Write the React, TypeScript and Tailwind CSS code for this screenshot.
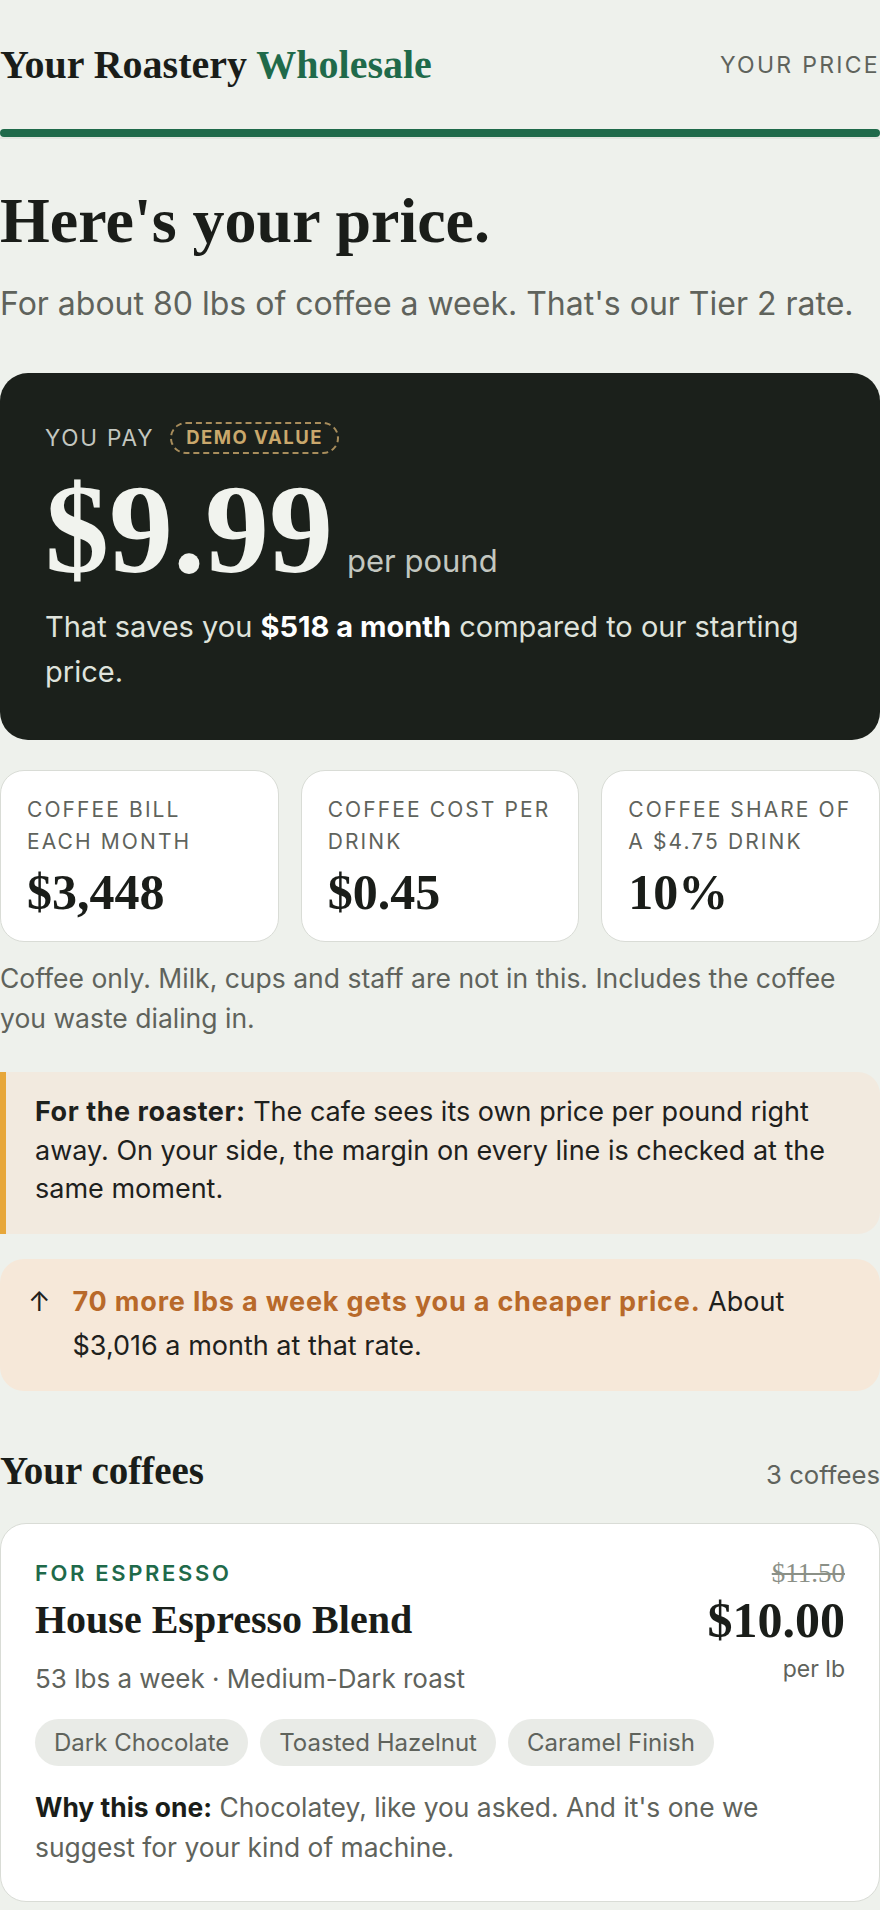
import React from 'react';

const serif = "font-['Liberation_Serif','Times_New_Roman',serif] font-bold";

const stats = [
  { label: ['Coffee bill', 'each month'], value: '$3,448' },
  { label: ['Coffee cost per', 'drink'], value: '$0.45' },
  { label: ['Coffee share of', 'a $4.75 drink'], value: '10%' },
];

const notes = ['Dark Chocolate', 'Toasted Hazelnut', 'Caramel Finish'];

const StatCard: React.FC<{ label: string[]; value: string }> = ({ label, value }) => (
  <div className="rounded-[24px] border border-[#d9dcd6] bg-white px-[26px] pt-[23px] pb-[24px]">
    <div className="text-[21px] leading-[32.7px] uppercase tracking-[0.1em] text-[#5f635c]">
      {label.map((line) => (
        <div key={line} className="whitespace-nowrap">{line}</div>
      ))}
    </div>
    <div className={`${serif} mt-[7.6px] text-[50px] leading-[50px] text-[#1a1d19]`}>{value}</div>
  </div>
);

export default function App() {
  return (
    <div className="min-h-screen bg-[#eef1ec] font-['Inter','Liberation_Sans',sans-serif] text-[#1a1d19]">
      <header className="flex items-center justify-between pt-[42px]">
        <div className={`${serif} text-[40px] leading-[46px]`}>
          Your Roastery <span className="text-[#1f6a4a]">Wholesale</span>
        </div>
        <div className="text-[23px] leading-[46px] tracking-[0.1em] text-[#5f635c]">YOUR PRICE</div>
      </header>
      <div className="mt-[41px] h-[8px] rounded-full bg-[#1f6a4a]" />
      <div className="h-[2px] bg-[#e2e6df]" />

      <h1 className={`${serif} mt-[47px] text-[64px] leading-[70px]`}>Here's your price.</h1>
      <p className="mt-[25px] text-[32px] leading-[45px] text-[#5f635c]">
        For about 80 lbs of coffee a week. That's our Tier 2 rate.
      </p>

      <section className="mt-[47px] rounded-[28px] bg-[#1b201b] px-[45px] pt-[49px] pb-[46px]">
        <div className="flex items-center gap-[16px]">
          <span className="text-[22.5px] leading-[32px] tracking-[0.08em] text-[#c3c7c0]">YOU PAY</span>
          <span className="inline-flex h-[32px] items-center rounded-full border-2 border-dashed border-[#a88d5c] px-[14px] text-[18.5px] font-bold tracking-[0.08em] text-[#caa86c]">
            DEMO VALUE
          </span>
        </div>
        <div className="mt-[11px] flex items-baseline gap-[14px]">
          <span className={`${serif} text-[128px] leading-[128px] text-[#f1f3ee]`}>$9.99</span>
          <span className="text-[31px] text-[#c3c7c0]">per pound</span>
        </div>
        <p className="mt-[10.5px] text-[29px] leading-[45px] text-[#dfe3dc]">
          That saves you <strong className="font-bold text-white">$518 a month</strong> compared to our starting price.
        </p>
      </section>

      <div className="mt-[30px] grid grid-cols-3 gap-[22px]">
        {stats.map((s) => (
          <StatCard key={s.value} label={s.label} value={s.value} />
        ))}
      </div>
      <p className="mt-[16.7px] text-[26.5px] leading-[40px] text-[#5f635c]">
        Coffee only. Milk, cups and staff are not in this. Includes the coffee you waste dialing in.
      </p>

      <div className="mt-[34.3px] rounded-r-[22px] border-l-[6px] border-[#e7a73a] bg-[#f2eadf] pt-[21px] pb-[25.3px] pl-[29px] pr-[35px] text-[27px] leading-[38.5px] text-[#1e211d]">
        <strong className="font-bold tracking-[0.02em]">For the roaster:</strong> The cafe sees its own price per pound
        right away. On your side, the margin on every line is checked at the same moment.
      </div>

      <div className="mt-[25px] flex gap-[22px] rounded-[24px] bg-[#f6e8d9] pt-[21px] pb-[22.5px] pl-[28px] pr-[28px] text-[27px] leading-[44px] text-[#1e211d]">
        <span>↑</span>
        <p>
          <strong className="font-bold tracking-[0.03em] text-[#b8692a]">70 more lbs a week gets you a cheaper price.</strong>{' '}
          About $3,016 a month at that rate.
        </p>
      </div>

      <div className="mt-[58px] flex items-baseline justify-between">
        <h2 className={`${serif} text-[39px] leading-[44px]`}>Your coffees</h2>
        <span className="text-[25.7px] text-[#5f635c]">3 coffees</span>
      </div>

      <article className="mt-[29px] rounded-[26px] border border-[#d9dcd6] bg-white px-[34px] pt-[34px] pb-[33.6px]">
        <div className="flex items-start justify-between">
          <div>
            <div className="text-[22px] leading-[30px] font-semibold tracking-[0.12em] text-[#1f6a4a]">FOR ESPRESSO</div>
            <h3 className={`${serif} mt-[8.5px] text-[40px] leading-[46px]`}>House Espresso Blend</h3>
            <div className="mt-[18px] text-[26px] leading-[36px] text-[#5f635c]">53 lbs a week · Medium-Dark roast</div>
          </div>
          <div className="text-right">
            <div className="font-['Liberation_Serif',serif] text-[27px] leading-[30px] text-[#8b9087] line-through">$11.50</div>
            <div className={`${serif} mt-[6.8px] text-[50px] leading-[50px]`}>$10.00</div>
            <div className="mt-[8.5px] text-[23px] leading-[30px] text-[#5f635c]">per lb</div>
          </div>
        </div>
        <div className="mt-[22.5px] flex flex-wrap gap-[12px]">
          {notes.map((n) => (
            <span key={n} className="rounded-full bg-[#e9ebe7] px-[19px] text-[24px] leading-[47px] text-[#5f635c]">
              {n}
            </span>
          ))}
        </div>
        <p className="mt-[21px] text-[26.4px] leading-[40px] text-[#5f635c]">
          <strong className="font-bold text-[#1a1d19]">Why this one:</strong> Chocolatey, like you asked. And it's one
          we suggest for your kind of machine.
        </p>
      </article>
    </div>
  );
}
